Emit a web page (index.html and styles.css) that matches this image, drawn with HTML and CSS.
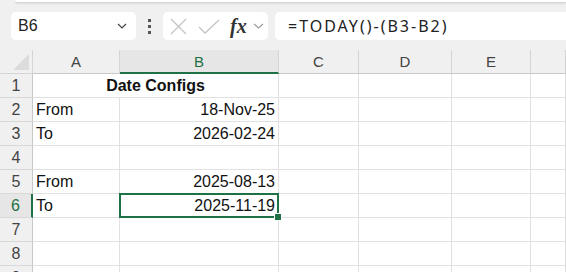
FILE: index.html
```html
<!DOCTYPE html>
<html>
<head>
    <title>Date Configs</title>
    <link rel="stylesheet" href="styles.css">
</head>
<body>
    <div class="ribbon-edge"></div>
    <div class="formula-bar">
        <div class="name-box">
            <span>B6</span>
            <svg class="chev" width="10" height="6" viewBox="0 0 10 6"><path d="M1 1 L5 5 L9 1" fill="none" stroke="#444" stroke-width="1.2"/></svg>
        </div>
        <div class="dots"><i></i><i></i><i></i></div>
        <div class="fn-box">
            <svg width="17" height="17" viewBox="0 0 17 17"><path d="M1 1 L16 16 M16 1 L1 16" stroke="#c4c4c4" stroke-width="1.3"/></svg>
            <svg width="22" height="15" viewBox="0 0 22 15"><path d="M1 8 L7 14 L21 1" fill="none" stroke="#c4c4c4" stroke-width="1.3"/></svg>
            <span class="fx">fx</span>
            <svg class="chev" width="11" height="6" viewBox="0 0 11 6"><path d="M1 1 L5.5 5 L10 1" fill="none" stroke="#999" stroke-width="1.1"/></svg>
        </div>
        <div class="formula">=TODAY()-(B3-B2)</div>
    </div>

    <div class="sheet">
        <div class="corner"><svg width="16" height="16" viewBox="0 0 16 16"><path d="M16 0 L16 16 L0 16 Z" fill="#dcdcdc"/></svg></div>
        <div class="col-head">A</div>
        <div class="col-head active">B</div>
        <div class="col-head">C</div>
        <div class="col-head">D</div>
        <div class="col-head">E</div>
        <div class="col-head"></div>

        <div class="row-head">1</div><div class="cell merged bold center">Date Configs</div><div class="cell"></div><div class="cell"></div><div class="cell"></div><div class="cell"></div>
        <div class="row-head">2</div><div class="cell">From</div><div class="cell right">18-Nov-25</div><div class="cell"></div><div class="cell"></div><div class="cell"></div><div class="cell"></div>
        <div class="row-head">3</div><div class="cell">To</div><div class="cell right">2026-02-24</div><div class="cell"></div><div class="cell"></div><div class="cell"></div><div class="cell"></div>
        <div class="row-head">4</div><div class="cell"></div><div class="cell"></div><div class="cell"></div><div class="cell"></div><div class="cell"></div><div class="cell"></div>
        <div class="row-head">5</div><div class="cell">From</div><div class="cell right">2025-08-13</div><div class="cell"></div><div class="cell"></div><div class="cell"></div><div class="cell"></div>
        <div class="row-head active">6</div><div class="cell">To</div><div class="cell right selected">2025-11-19<span class="handle"></span></div><div class="cell"></div><div class="cell"></div><div class="cell"></div><div class="cell"></div>
        <div class="row-head">7</div><div class="cell"></div><div class="cell"></div><div class="cell"></div><div class="cell"></div><div class="cell"></div><div class="cell"></div>
        <div class="row-head">8</div><div class="cell"></div><div class="cell"></div><div class="cell"></div><div class="cell"></div><div class="cell"></div><div class="cell"></div>
        <div class="row-head">9</div><div class="cell"></div><div class="cell"></div><div class="cell"></div><div class="cell"></div><div class="cell"></div><div class="cell"></div>
    </div>
</body>
</html>
```

FILE: styles.css
```css
body { margin: 0; background: #f0f0f0; font-family: "Liberation Sans", Arial, sans-serif; overflow: hidden; height: 272px; }
.ribbon-edge { height: 2px; margin-left: 15px; background: #fff; border-bottom: 1px solid #d6d6d6; border-bottom-left-radius: 4px; box-shadow: 0 1px 2px rgba(0,0,0,0.08); }
.formula-bar { display: flex; align-items: center; height: 28px; padding: 9px 0 9px 11px; }
.name-box { width: 125px; height: 28px; box-sizing: border-box; background: #fff; border-radius: 5px; display: flex; align-items: center; justify-content: space-between; padding: 0 9px 0 7px; font-size: 16px; color: #222; }
.dots { width: 27px; display: flex; flex-direction: column; align-items: center; gap: 3px; }
.dots i { display: block; width: 3px; height: 3px; background: #555; }
.fn-box { width: 105px; height: 28px; box-sizing: border-box; background: #fff; border-radius: 5px; display: flex; align-items: center; padding: 0 3px 0 7px; }
.fn-box svg:nth-child(2) { margin-left: 11px; }
.fx { font-family: "Liberation Serif", "Times New Roman", serif; font-style: italic; font-weight: bold; font-size: 20px; margin-left: 10px; color: #333; }
.fn-box .chev { margin-left: 6px; }
.formula { flex: 1; height: 28px; margin-left: 7px; background: #fff; border-radius: 5px 0 0 5px; display: flex; align-items: center; padding-left: 13px; font-size: 16px; color: #222; font-family: "Noto Sans", sans-serif; letter-spacing: 2px; }
.sheet { display: grid; grid-template-columns: 33px 87px 159px 80px 93px 79px 1fr; grid-template-rows: repeat(10, 24px); margin-top: 1px; height: 223px; overflow: hidden; }
.corner { background: #f0f0f0; border-right: 1px solid #d4d4d4; border-bottom: 1px solid #d4d4d4; display: flex; align-items: flex-end; justify-content: flex-end; padding: 0 3px 3px 0; box-sizing: border-box; }
.col-head { background: #f0f0f0; border-right: 1px solid #d4d4d4; border-bottom: 1px solid #c8c8c8; text-align: center; font-size: 15px; line-height: 23px; color: #444; box-sizing: border-box; }
.col-head.active { background: #e6e6e6; color: #1e7145; border-bottom: 2px solid #1e7145; }
.row-head { background: #f0f0f0; border-right: 1px solid #c8c8c8; border-bottom: 1px solid #d8d8d8; text-align: center; font-size: 16px; line-height: 23px; color: #444; box-sizing: border-box; }
.row-head.active { background: #e6e6e6; color: #1e7145; border-right: 2px solid #1e7145; }
.cell { background: #fff; border-right: 1px solid #e1e1e1; border-bottom: 1px solid #e1e1e1; box-sizing: border-box; font-size: 16px; line-height: 23px; padding: 0 3px; color: #111; white-space: nowrap; }
.merged { grid-column: span 2; }
.bold { font-weight: bold; }
.center { text-align: center; }
.right { text-align: right; }
.selected { position: relative; }
.selected::after { content: ""; position: absolute; left: -1px; top: -1px; right: -1px; bottom: -1px; border: 2px solid #1e7145; }
.handle { position: absolute; right: -4px; bottom: -4px; width: 6px; height: 6px; background: #1e7145; border: 1px solid #fff; z-index: 1; }
```
